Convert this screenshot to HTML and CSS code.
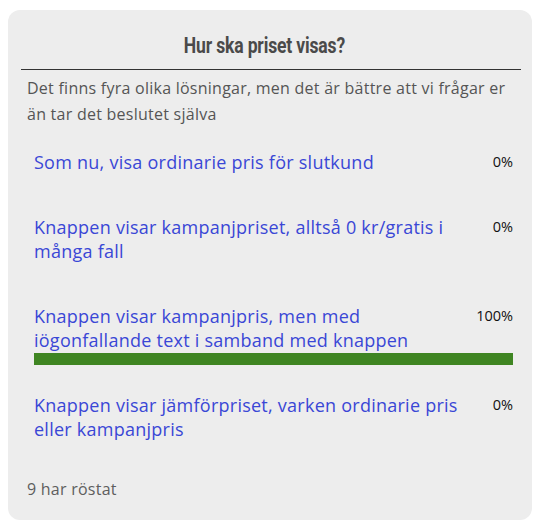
FILE: index.html
```html
<!DOCTYPE html>
<html lang="sv">
<head>
  <meta charset="UTF-8">
  <meta name="viewport" content="width=device-width, initial-scale=1.0">
  <title>Hur ska priset visas?</title>
  <link rel="stylesheet" href="styles.css">
</head>
<body>
  <div class="poll">
    <h2 class="poll-title"><span>Hur ska priset visas?</span></h2>
    <p class="poll-desc">Det finns fyra olika lösningar, men det är bättre att vi frågar er än tar det beslutet själva</p>

    <ul class="options">
      <li class="option">
        <div class="option-row">
          <a class="option-text" href="#">Som nu, visa ordinarie pris för slutkund</a>
          <span class="option-pct">0%</span>
        </div>
        <div class="bar"><div class="bar-fill" style="width:0%"></div></div>
      </li>
      <li class="option">
        <div class="option-row">
          <a class="option-text" href="#">Knappen visar kampanjpriset, alltså 0 kr/gratis i många fall</a>
          <span class="option-pct">0%</span>
        </div>
        <div class="bar"><div class="bar-fill" style="width:0%"></div></div>
      </li>
      <li class="option">
        <div class="option-row">
          <a class="option-text" href="#">Knappen visar kampanjpris, men med iögonfallande text i samband med knappen</a>
          <span class="option-pct">100%</span>
        </div>
        <div class="bar"><div class="bar-fill" style="width:100%"></div></div>
      </li>
      <li class="option">
        <div class="option-row">
          <a class="option-text" href="#">Knappen visar jämförpriset, varken ordinarie pris eller kampanjpris</a>
          <span class="option-pct">0%</span>
        </div>
        <div class="bar"><div class="bar-fill" style="width:0%"></div></div>
      </li>
    </ul>

    <p class="poll-votes">9 har röstat</p>
  </div>
</body>
</html>
```

FILE: styles.css
```css
body {
  margin: 0;
  background: #fff;
  font-family: "Open Sans", "Noto Sans", Arial, sans-serif;
}

.poll {
  background: #ededed;
  border-radius: 12px;
  margin: 10px 0 0 8px;
  width: 524px;
  box-sizing: border-box;
  padding: 0 11px 18px 13px;
}

.poll-title {
  margin: 0;
  padding: 21px 14px 10px 0;
  font-family: Roboto, Arial, sans-serif;
  font-weight: bold;
  font-size: 22.5px;
  line-height: 28px;
  color: #4a4a4a;
  text-align: center;
  border-bottom: 1px solid #333;
}

.poll-title span {
  display: inline-block;
  transform: scaleX(0.78);
  letter-spacing: -0.2px;
}

.poll-desc {
  margin: 5px 0 0;
  padding: 0 6px;
  font-size: 16px;
  line-height: 26px;
  letter-spacing: 0.25px;
  color: #555;
}

.options {
  list-style: none;
  margin: 23px 0 0;
  padding: 0 8px 0 13px;
}

.option {
  margin-bottom: 28px;
}

.option:last-child {
  margin-bottom: 0;
}

.option-row {
  display: flex;
  justify-content: space-between;
  gap: 20px;
}

.option-text {
  color: #3a47d6;
  text-decoration: none;
  font-size: 18px;
  line-height: 24px;
  letter-spacing: 0.25px;
}

.option-pct {
  color: #111;
  font-size: 14.5px;
  line-height: 24px;
  white-space: nowrap;
}

.bar {
  margin-top: 1px;
  height: 12px;
}

.bar-fill {
  height: 100%;
  background: #3f8522;
}

.poll-votes {
  margin: 22px 0 0;
  padding: 0 6px;
  font-size: 16px;
  line-height: 26px;
  letter-spacing: 0.25px;
  color: #5e5e5e;
}
```
